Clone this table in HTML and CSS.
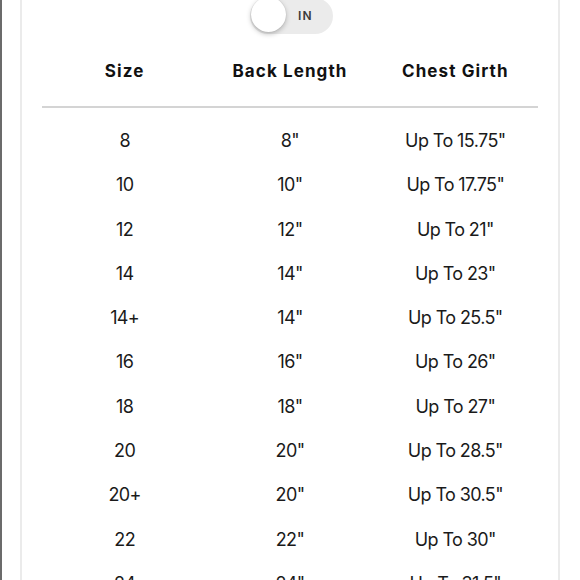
FILE: index.html
```html
<!DOCTYPE html>
<html>
<head>
<meta charset="utf-8">
<link rel="stylesheet" href="styles.css">
</head>
<body>
<div class="page">
  <div class="panel">
    <div class="toggle-wrap">
      <div class="toggle">
        <span class="knob"></span>
        <span class="toggle-label">IN</span>
      </div>
    </div>
    <div class="table">
      <div class="head">
        <div>Size</div><div>Back Length</div><div>Chest Girth</div>
      </div>
      <div class="rows">
        <div class="row"><div>8</div><div>8"</div><div>Up To 15.75"</div></div>
        <div class="row"><div>10</div><div>10"</div><div>Up To 17.75"</div></div>
        <div class="row"><div>12</div><div>12"</div><div>Up To 21"</div></div>
        <div class="row"><div>14</div><div>14"</div><div>Up To 23"</div></div>
        <div class="row"><div>14+</div><div>14"</div><div>Up To 25.5"</div></div>
        <div class="row"><div>16</div><div>16"</div><div>Up To 26"</div></div>
        <div class="row"><div>18</div><div>18"</div><div>Up To 27"</div></div>
        <div class="row"><div>20</div><div>20"</div><div>Up To 28.5"</div></div>
        <div class="row"><div>20+</div><div>20"</div><div>Up To 30.5"</div></div>
        <div class="row"><div>22</div><div>22"</div><div>Up To 30"</div></div>
        <div class="row"><div>24</div><div>24"</div><div>Up To 31.5"</div></div>
      </div>
    </div>
  </div>
</div>
</body>
</html>
```
FILE: styles.css
```css
html, body {
  margin: 0;
  padding: 0;
  background: #ffffff;
  overflow: hidden;
}
.page {
  height: 580px;
  border-left: 2px solid #6b6b6b;
  padding-left: 18px;
  box-sizing: border-box;
  overflow: hidden;
}
.panel {
  width: 540px;
  height: 580px;
  box-sizing: border-box;
  border-left: 2px solid #ebebeb;
  border-right: 2px solid #ebebeb;
  padding: 0 20px;
  overflow: hidden;
}
.toggle-wrap {
  display: flex;
  justify-content: center;
  margin-top: -2px;
  padding-left: 2px;
}
.toggle {
  position: relative;
  width: 83px;
  height: 36px;
  border-radius: 18px;
  background: #ebebeb;
  display: flex;
  align-items: center;
  justify-content: flex-end;
  padding-right: 20px;
  box-sizing: border-box;
}
.knob {
  position: absolute;
  left: 1px;
  top: -1px;
  width: 35px;
  height: 35px;
  border-radius: 50%;
  background: #ffffff;
  box-shadow: 0 2px 5px rgba(0,0,0,0.25), 0 0 1px rgba(0,0,0,0.18);
}
.toggle-label {
  font-family: "Inter", "Liberation Sans", sans-serif;
  font-size: 12px;
  font-weight: 600;
  color: #3a3a3a;
  letter-spacing: 1px;
  margin-top: -2px;
}
.table {
  margin-top: 26px;
}
.head {
  display: grid;
  grid-template-columns: repeat(3, 1fr);
  text-align: center;
  font-family: "Inter", "Liberation Sans", sans-serif;
  font-weight: 700;
  font-size: 17px;
  letter-spacing: 1.1px;
  color: #111111;
  line-height: 22px;
  padding-bottom: 24px;
  border-bottom: 2px solid #d4d4d4;
}
.rows {
  padding-top: 11px;
}
.row {
  display: grid;
  grid-template-columns: repeat(3, 1fr);
  text-align: center;
  font-family: "Inter", "Liberation Sans", sans-serif;
  font-size: 18px;
  font-weight: 400;
  letter-spacing: -0.6px;
  color: #1a1a1a;
  height: 44.3px;
  line-height: 44.3px;
}
```
